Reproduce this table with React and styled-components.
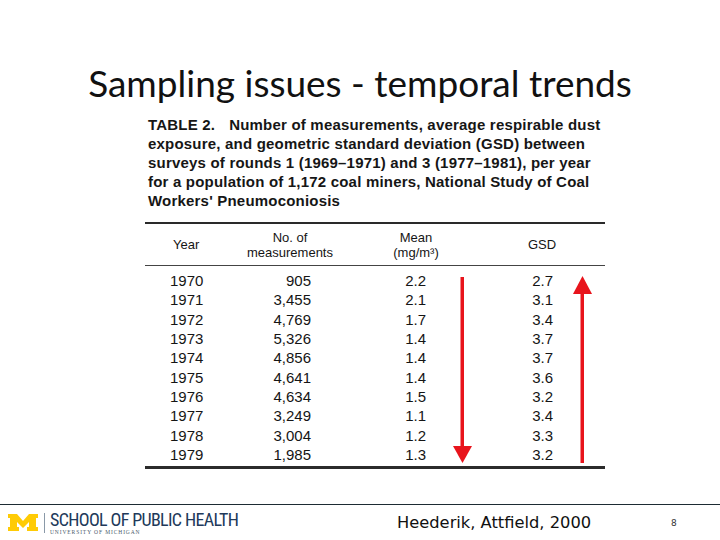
import React from "react";
import styled, { createGlobalStyle } from "styled-components";

const Global = createGlobalStyle`
  html, body { margin: 0; padding: 0; background: #fff; }
  #root { width: 720px; height: 540px; }
`;

const Slide = styled.div`
  width: 720px;
  height: 540px;
  display: flex;
  flex-direction: column;
  background: #fff;
  overflow: hidden;
`;

const Title = styled.h1`
  margin: 0;
  padding-top: 62px;
  font-family: Lato, "Open Sans", sans-serif;
  font-weight: 400;
  font-size: 37px;
  line-height: 42px;
  color: #111;
  text-align: center;
`;

const Main = styled.main`
  flex: 1;
  display: flex;
  padding: 11px 0 0 145px;
`;

const Figure = styled.section`
  width: 460px;
  display: flex;
  flex-direction: column;
`;

const Caption = styled.p`
  margin: 0 0 12px 3px;
  font-family: "Liberation Sans", Arial, sans-serif;
  font-weight: 700;
  font-size: 15px;
  line-height: 19px;
  letter-spacing: 0.2px;
  color: #161616;
  white-space: nowrap;
`;

const Label = styled.span`
  margin-right: 14px;
`;

const Grid = styled.div`
  display: grid;
  grid-template-columns: 100px 90px 105px 165px;
  font-family: "Liberation Sans", Arial, sans-serif;
  color: #151515;
`;

const HeadRow = styled(Grid)`
  height: 41px;
  border-top: 2px solid #2a2a2a;
  border-bottom: 1px solid #444;
  align-items: center;
  font-size: 13px;
  line-height: 15px;
`;

const HeadCell = styled.div`
  text-align: ${(p) => p.$align || "center"};
  padding-left: ${(p) => p.$pl || 0}px;
`;

const Body = styled.div`
  position: relative;
  padding: 5px 0 2px;
  border-bottom: 3px solid #2b2b2b;
`;

const Row = styled(Grid)`
  height: 19.3px;
  align-items: center;
  font-size: 15px;
  line-height: 19px;
`;

const Cell = styled.div`
  text-align: ${(p) => p.$align || "left"};
  padding-left: ${(p) => p.$pl || 0}px;
  padding-right: ${(p) => p.$pr || 0}px;
`;

const Arrows = styled.svg`
  position: absolute;
  left: 0;
  top: 0;
  width: 460px;
  height: 205px;
  pointer-events: none;
`;

const Footer = styled.footer`
  height: 35px;
  border-top: 1.5px solid #1d2b33;
  display: flex;
  align-items: center;
`;

const Logo = styled.div`
  display: flex;
  align-items: center;
  padding-left: 8px;
  width: 380px;
  box-sizing: border-box;
`;

const Divider = styled.div`
  width: 1px;
  height: 20px;
  background: #8a99a8;
  margin: 0 5px 0 6px;
`;

const LogoText = styled.div`
  display: flex;
  flex-direction: column;
  color: #21395a;
`;

const School = styled.span`
  font-family: "Liberation Sans Narrow", "Roboto Condensed", "DejaVu Sans Condensed", sans-serif;
  font-size: 18px;
  line-height: 18px;
  letter-spacing: -0.65px;
`;

const Univ = styled.span`
  font-family: "Liberation Serif", serif;
  font-size: 5.5px;
  line-height: 6px;
  letter-spacing: 0.9px;
  color: #4a5a6a;
`;

const Citation = styled.div`
  width: 274px;
  padding-left: 17px;
  font-family: "DejaVu Sans", Verdana, sans-serif;
  font-size: 16.3px;
  color: #111;
`;

const PageNo = styled.div`
  font-family: "DejaVu Sans", sans-serif;
  font-size: 9px;
  color: #333;
`;

const rows = [
  ["1970", "905", "2.2", "2.7"],
  ["1971", "3,455", "2.1", "3.1"],
  ["1972", "4,769", "1.7", "3.4"],
  ["1973", "5,326", "1.4", "3.7"],
  ["1974", "4,856", "1.4", "3.7"],
  ["1975", "4,641", "1.4", "3.6"],
  ["1976", "4,634", "1.5", "3.2"],
  ["1977", "3,249", "1.1", "3.4"],
  ["1978", "3,004", "1.2", "3.3"],
  ["1979", "1,985", "1.3", "3.2"],
];

export default function App() {
  return (
    <>
      <Global />
      <Slide>
        <Title>Sampling issues - temporal trends</Title>
        <Main>
          <Figure>
            <Caption>
              <Label>TABLE 2.</Label>Number of measurements, average respirable dust
              <br />
              exposure, and geometric standard deviation (GSD) between
              <br />
              surveys of rounds 1 (1969–1971) and 3 (1977–1981), per year
              <br />
              for a population of 1,172 coal miners, National Study of Coal
              <br />
              Workers' Pneumoconiosis
            </Caption>
            <HeadRow>
              <HeadCell $align="left" $pl={28}>Year</HeadCell>
              <HeadCell>No. of<br />measurements</HeadCell>
              <HeadCell $pl={57}>Mean<br />(mg/m³)</HeadCell>
              <HeadCell $align="left" $pl={88}>GSD</HeadCell>
            </HeadRow>
            <Body>
              {rows.map((r) => (
                <Row key={r[0]}>
                  <Cell $pl={25}>{r[0]}</Cell>
                  <Cell $align="right" $pr={24}>{r[1]}</Cell>
                  <Cell $align="right" $pr={14}>{r[2]}</Cell>
                  <Cell $align="right" $pr={52}>{r[3]}</Cell>
                </Row>
              ))}
              <Arrows viewBox="0 0 460 205">
                <rect x="315.5" y="11" width="3.5" height="172" fill="#e8141c" />
                <polygon points="308,180 327,180 317.5,197" fill="#e8141c" />
                <rect x="435.5" y="26" width="3.5" height="171" fill="#e8141c" />
                <polygon points="428,28 447,28 437.5,10" fill="#e8141c" />
              </Arrows>
            </Body>
          </Figure>
        </Main>
        <Footer>
          <Logo>
            <svg width="30" height="17" viewBox="0 0 30 17">
              <polygon
                points="0,0 9,0 15,7 21,0 30,0 30,4 28,4 28,13 30,13 30,17 19,17 19,13 21,13 21,8 15,14 9,8 9,13 11,13 11,17 0,17 0,13 2,13 2,4 0,4"
                fill="#ffcb05"
              />
            </svg>
            <Divider />
            <LogoText>
              <School>SCHOOL OF PUBLIC HEALTH</School>
              <Univ>UNIVERSITY OF MICHIGAN</Univ>
            </LogoText>
          </Logo>
          <Citation>Heederik, Attfield, 2000</Citation>
          <PageNo>8</PageNo>
        </Footer>
      </Slide>
    </>
  );
}
